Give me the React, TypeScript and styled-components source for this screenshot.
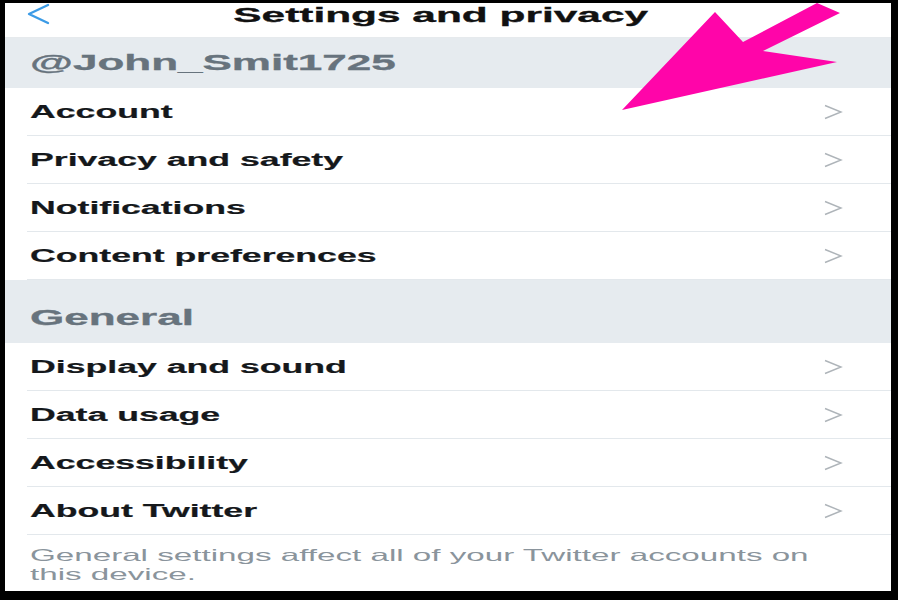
import styled, { createGlobalStyle } from 'styled-components';

const GlobalStyle = createGlobalStyle`
  html, body {
    margin: 0;
    padding: 0;
    background: #000;
  }
  * {
    box-sizing: border-box;
  }
`;

const accountItems = ["Account", "Privacy and safety", "Notifications", "Content preferences"];
const generalItems = ["Display and sound", "Data usage", "Accessibility", "About Twitter"];

const BackIcon = () => (
  <svg width="26" height="24" viewBox="0 0 26 24">
    <polyline points="22,2 3,11 22,20" fill="none" stroke="#3b9be6" strokeWidth="2.4" strokeLinecap="round" strokeLinejoin="round" />
  </svg>
);

const ChevronIcon = () => (
  <svg width="20" height="16" viewBox="0 0 20 16">
    <polyline points="2,1.5 18,8 2,14.5" fill="none" stroke="#aeb4b9" strokeWidth="1.4" strokeLinejoin="miter" />
  </svg>
);

export default function App() {
  return (
    <>
      <GlobalStyle />
      <Page>
        <Screen>
          <Header>
            <BackButton>
              <BackIcon />
            </BackButton>
            <Title>Settings and privacy</Title>
          </Header>

          <Section $height={50} $align="center">
            <SectionLabel>@John_Smit1725</SectionLabel>
          </Section>
          {accountItems.map((item) => (
            <Row key={item}>
              <RowInner>
                <RowLabel>{item}</RowLabel>
                <ChevronWrap>
                  <ChevronIcon />
                </ChevronWrap>
              </RowInner>
            </Row>
          ))}

          <Section $height={63} $align="flex-end">
            <SectionLabel>General</SectionLabel>
          </Section>
          {generalItems.map((item) => (
            <Row key={item}>
              <RowInner>
                <RowLabel>{item}</RowLabel>
                <ChevronWrap>
                  <ChevronIcon />
                </ChevronWrap>
              </RowInner>
            </Row>
          ))}

          <Footer>
            <FooterText>General settings affect all of your Twitter accounts on this device.</FooterText>
          </Footer>
        </Screen>

        {/* pink arrow annotation drawn over the screenshot */}
        <Arrow width="898" height="600" viewBox="0 0 898 600">
          <polygon
            points="622,110 715,12 743,42 817,3 840,13 763,51 837,62"
            fill="#ff05a9"
          />
        </Arrow>
      </Page>
    </>
  );
}

const Page = styled.div`
  position: relative;
  width: 898px;
  height: 600px;
  background: #000;
  padding: 3px 7px 9px 5px;
  font-family: "Liberation Sans", Arial, sans-serif;
  overflow: hidden;
`;

const Screen = styled.div`
  display: flex;
  flex-direction: column;
  width: 100%;
  height: 100%;
  background: #fff;
  overflow: hidden;
`;

const Header = styled.header`
  position: relative;
  display: flex;
  justify-content: center;
  align-items: flex-start;
  height: 35px;
  padding-top: 1px;
  border-bottom: 1px solid #e6eaed;
  flex-shrink: 0;
`;

const BackButton = styled.div`
  position: absolute;
  left: 21px;
  top: 0;
  display: flex;
`;

const Title = styled.h1`
  margin: 0 14px 0 0;
  font-size: 21px;
  line-height: 21px;
  font-weight: 700;
  color: #111;
  transform: scaleX(2.02);
  transform-origin: center;
  white-space: nowrap;
  -webkit-text-stroke: 0.3px #111;
`;

const Section = styled.div<{ $height: number; $align: string }>`
  display: flex;
  align-items: ${(p) => p.$align};
  height: ${(p) => p.$height}px;
  padding: 0 0 ${(p) => (p.$align === "flex-end" ? 14 : 0)}px 25px;
  background: #e6ebef;
  flex-shrink: 0;
`;

const SectionLabel = styled.span`
  display: inline-block;
  font-size: 22px;
  line-height: 22px;
  font-weight: 700;
  color: #67737d;
  transform: scaleX(2);
  transform-origin: left center;
  white-space: nowrap;
  -webkit-text-stroke: 0.3px #67737d;
`;

const Row = styled.div`
  height: 48px;
  padding-left: 22px;
  flex-shrink: 0;
`;

const RowInner = styled.div`
  display: flex;
  align-items: center;
  justify-content: space-between;
  height: 100%;
  padding-left: 3px;
  border-bottom: 1px solid #e3e8ec;
`;

const RowLabel = styled.span`
  display: inline-block;
  font-size: 18px;
  line-height: 20px;
  font-weight: 700;
  color: #15181b;
  transform: scaleX(1.98);
  transform-origin: left center;
  white-space: nowrap;
  -webkit-text-stroke: 0.2px #15181b;
`;

const ChevronWrap = styled.div`
  display: flex;
  margin-right: 48px;
`;

const Footer = styled.div`
  flex: 1;
  padding: 11px 0 0 25px;
`;

const FooterText = styled.p`
  margin: 0;
  max-width: 400px;
  font-size: 16.5px;
  line-height: 19px;
  color: #8a949c;
  transform: scaleX(2.01);
  transform-origin: left top;
`;

const Arrow = styled.svg`
  position: absolute;
  left: 0;
  top: 0;
  pointer-events: none;
`;
